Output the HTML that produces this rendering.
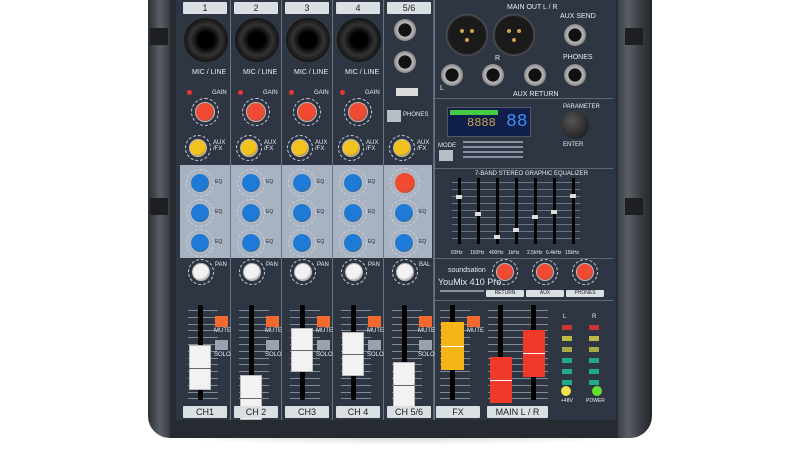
<!DOCTYPE html>
<html><head><meta charset="utf-8"><style>
*{margin:0;padding:0;box-sizing:border-box}
body{width:800px;height:450px;background:#fff;position:relative;overflow:hidden;font-family:"Liberation Sans",sans-serif}
.a{position:absolute}
.rail{background:linear-gradient(90deg,#2a2d33,#5a5f66 40%,#3a3e44 70%,#22252a)}
.lbl{position:absolute;background:#d9dfe2;color:#222;font-size:9px;text-align:center;line-height:12px;border-radius:1px}
.k{position:absolute;border-radius:50%}
.t{position:absolute;color:#e8ecf0;font-size:6px;white-space:nowrap}
</style></head><body>
<div class="a" style="left:150px;top:425px;width:500px;height:20px;background:radial-gradient(ellipse at center,#ccc,#fff 70%)"></div>
<div class="a rail" style="left:148px;top:0;width:30px;height:438px;border-radius:0 0 0 22px"></div>
<div class="a rail" style="left:612px;top:0;width:40px;height:438px;border-radius:0 0 22px 0"></div>
<div class="a" style="left:170px;top:0;width:448px;height:438px;background:#262a31"></div>
<div class="a" style="left:176px;top:0;width:440px;height:420px;background:#2e3644"></div>
<div class="a" style="left:180px;top:165px;width:252px;height:93px;background:#a7b3c0"></div>
<div class="a" style="left:433px;top:0;width:1px;height:420px;background:#5d6877"></div>
<div class="a" style="left:433px;top:98px;width:180px;height:1px;background:#5d6877"></div>
<div class="a" style="left:433px;top:168px;width:180px;height:1px;background:#5d6877"></div>
<div class="a" style="left:433px;top:258px;width:180px;height:1px;background:#5d6877"></div>
<div class="a" style="left:433px;top:300px;width:180px;height:1px;background:#5d6877"></div>
<div id="g"></div>
<script>
var h='';
function A(s){h+=s}
function knob(x,y,r,c){A('<div class="k" style="left:'+(x-r-4)+'px;top:'+(y-r-4)+'px;width:'+(2*r+8)+'px;height:'+(2*r+8)+'px;border:1px dashed #ccd"></div><div class="k" style="left:'+(x-r)+'px;top:'+(y-r)+'px;width:'+2*r+'px;height:'+2*r+'px;background:radial-gradient(circle at 40% 35%,'+c+','+c+' 60%,#555 100%);border:1.5px solid #bbb"></div>')}
function jack(x,y,r){A('<div class="k" style="left:'+(x-r)+'px;top:'+(y-r)+'px;width:'+2*r+'px;height:'+2*r+'px;background:radial-gradient(circle,#111 40%,#bbb 45%,#777 80%,#222 100%)"></div>')}
var cx=[180,231,282,333,384],labs=['1','2','3','4','5/6'],bl=['CH1','CH 2','CH3','CH 4','CH 5/6'];
var caps=[[345,390],[375,420],[328,372],[332,376],[362,408]];
for(var i=0;i<5;i++){var x=cx[i];
 A('<div class="a" style="left:'+(x+50)+'px;top:0;width:1px;height:420px;background:#6a7584"></div>');
 A('<div class="lbl" style="left:'+(x+3)+'px;top:2px;width:44px;height:12px">'+labs[i]+'</div>');
 if(i<4){A('<div class="k" style="left:'+(x+4)+'px;top:18px;width:44px;height:44px;background:radial-gradient(circle,#000 25%,#333 50%,#111 72%,#555 86%,#111 100%)"></div>');
  A('<div class="t" style="left:'+(x+12)+'px;top:69px;font-size:7px">MIC / LINE</div>');
  A('<div class="k" style="left:'+(x+7)+'px;top:90px;width:5px;height:5px;background:#e33"></div>');
  A('<div class="t" style="left:'+(x+32)+'px;top:90px">GAIN</div>');
  knob(x+25,112,10,'#f04a32');}
 else{jack(x+21,30,11);jack(x+21,62,11);
  A('<div class="a" style="left:'+(x+12)+'px;top:88px;width:22px;height:8px;background:#ddd"></div>');
  A('<div class="a" style="left:'+(x+3)+'px;top:110px;width:14px;height:12px;background:#b7bec6"></div><div class="t" style="left:'+(x+19)+'px;top:112px">PHONES</div>');
  knob(x+21,183,11,'#f04a32');}
 knob(x+18,148,9,'#f2c31d');
 A('<div class="t" style="left:'+(x+33)+'px;top:140px">AUX<br>/FX</div>');
 var ys=i<4?[183,213,243]:[213,243];
 for(var j=0;j<ys.length;j++){knob(x+20,ys[j],10,'#1e7ad6');A('<div class="t" style="left:'+(x+35)+'px;top:'+(ys[j]-4)+'px;color:#223;font-size:5px">EQ</div>')}
 knob(x+21,272,9,'#f2f2f2');
 A('<div class="t" style="left:'+(x+35)+'px;top:262px">'+(i<4?'PAN':'BAL')+'</div>');
 for(var k=0;k<14;k++)A('<div class="a" style="left:'+(x+8)+'px;top:'+(310+k*6.8)+'px;width:30px;height:1px;background:#7f8a98"></div>');
 A('<div class="a" style="left:'+(x+18)+'px;top:305px;width:5px;height:95px;background:#000;border-radius:2px"></div>');
 A('<div class="a" style="left:'+(x+9)+'px;top:'+caps[i][0]+'px;width:22px;height:'+(caps[i][1]-caps[i][0])+'px;background:#f2f2f2;border:1px solid #bbb"></div><div class="a" style="left:'+(x+9)+'px;top:'+((caps[i][0]+caps[i][1])/2)+'px;width:22px;height:1px;background:#666"></div>');
 A('<div class="a" style="left:'+(x+35)+'px;top:316px;width:13px;height:11px;background:#f46a2e"></div><div class="t" style="left:'+(x+34)+'px;top:328px">MUTE</div>');
 A('<div class="a" style="left:'+(x+35)+'px;top:340px;width:13px;height:10px;background:#9aa3ad"></div><div class="t" style="left:'+(x+34)+'px;top:352px">SOLO</div>');
 A('<div class="lbl" style="left:'+(x+3)+'px;top:406px;width:44px;height:12px">'+bl[i]+'</div>');
}
A('<div class="t" style="left:507px;top:4px;font-size:7px">MAIN OUT L / R</div>');
[[467,35],[514,35]].forEach(function(p){A('<div class="k" style="left:'+(p[0]-21)+'px;top:'+(p[1]-21)+'px;width:42px;height:42px;background:radial-gradient(circle,#1a1a1a 62%,#666 72%,#111 100%)"></div>');
 [[-5,-4],[5,-4],[0,5]].forEach(function(q){A('<div class="k" style="left:'+(p[0]+q[0]-2)+'px;top:'+(p[1]+q[1]-2)+'px;width:4px;height:4px;background:#c9a44a"></div>')})});
jack(452,75,11);jack(493,75,11);jack(535,75,11);jack(575,35,11);jack(575,75,11);
A('<div class="t" style="left:560px;top:13px;font-size:7px">AUX SEND</div><div class="t" style="left:563px;top:54px;font-size:7px">PHONES</div><div class="t" style="left:513px;top:91px;font-size:7px">AUX RETURN</div><div class="t" style="left:440px;top:85px;font-size:7px">L</div><div class="t" style="left:495px;top:55px;font-size:7px">R</div>');
A('<div class="a" style="left:447px;top:107px;width:84px;height:30px;background:#0f1f4a;border:1px solid #556"></div>');
A('<div class="a" style="left:450px;top:110px;width:48px;height:5px;background:#4c4"></div>');
A('<div class="t" style="left:467px;top:116px;font-size:12px;color:#c9a24a;font-family:Liberation Mono">8888</div><div class="t" style="left:506px;top:112px;font-size:18px;color:#3a8ff0;font-family:Liberation Mono">88</div>');
A('<div class="k" style="left:561px;top:111px;width:28px;height:28px;background:radial-gradient(circle at 40% 35%,#555,#111)"></div>');
A('<div class="t" style="left:563px;top:104px">PARAMETER</div><div class="t" style="left:563px;top:142px">ENTER</div>');
A('<div class="a" style="left:439px;top:150px;width:14px;height:11px;background:#b7bec6"></div><div class="t" style="left:438px;top:143px">MODE</div>');
for(var r=0;r<4;r++)A('<div class="a" style="left:463px;top:'+(141+r*5)+'px;width:60px;height:2px;background:#8893a1"></div>');
A('<div class="t" style="left:475px;top:171px">7-BAND STEREO GRAPHIC EQUALIZER</div>');
var eqy=[195,212,235,228,215,210,194],fq=['63Hz','150Hz','400Hz','1kHz','2.5kHz','6.4kHz','15kHz'];
for(var r=0;r<9;r++)A('<div class="a" style="left:452px;top:'+(182+r*7)+'px;width:128px;height:1px;background:#6a7584"></div>');
for(var e=0;e<7;e++){var ex=459+e*19;A('<div class="a" style="left:'+(ex-1.5)+'px;top:178px;width:3px;height:66px;background:#000"></div><div class="a" style="left:'+(ex-3)+'px;top:'+eqy[e]+'px;width:6px;height:4px;background:#ddd"></div><div class="t" style="left:'+(ex-8)+'px;top:250px;font-size:5px">'+fq[e]+'</div>')}
A('<div class="t" style="left:448px;top:267px;font-size:7px">soundsation</div><div class="t" style="left:438px;top:277px;font-size:9px">YouMix 410 Pro</div><div class="a" style="left:440px;top:290px;width:44px;height:2px;background:#8893a1"></div>');
[505,545,585].forEach(function(x,n){knob(x,272,9,'#f04a32');A('<div class="lbl" style="left:'+(x-19)+'px;top:290px;width:38px;height:7px;font-size:5px;line-height:7px">'+['RETURN','AUX','PHONES'][n]+'</div>')});
for(var k=0;k<14;k++){A('<div class="a" style="left:440px;top:'+(310+k*6.8)+'px;width:30px;height:1px;background:#7f8a98"></div>');A('<div class="a" style="left:488px;top:'+(310+k*6.8)+'px;width:60px;height:1px;background:#7f8a98"></div>')}
A('<div class="a" style="left:450px;top:305px;width:5px;height:95px;background:#000"></div><div class="a" style="left:441px;top:322px;width:23px;height:48px;background:#f7b416"></div><div class="a" style="left:441px;top:346px;width:23px;height:1px;background:#fff"></div>');
A('<div class="a" style="left:467px;top:316px;width:13px;height:11px;background:#f46a2e"></div><div class="t" style="left:467px;top:328px">MUTE</div>');
A('<div class="a" style="left:498px;top:305px;width:5px;height:95px;background:#000"></div><div class="a" style="left:490px;top:357px;width:22px;height:46px;background:#ef3a2a"></div><div class="a" style="left:490px;top:380px;width:22px;height:1px;background:#fff"></div>');
A('<div class="a" style="left:531px;top:305px;width:5px;height:95px;background:#000"></div><div class="a" style="left:523px;top:330px;width:22px;height:47px;background:#ef3a2a"></div><div class="a" style="left:523px;top:353px;width:22px;height:1px;background:#fff"></div>');
A('<div class="t" style="left:563px;top:314px">L</div><div class="t" style="left:592px;top:314px">R</div>');
var mc=['#c33','#bb4','#aa4','#2a8','#2a8','#2a8'];
for(var m=0;m<6;m++){A('<div class="a" style="left:562px;top:'+(325+m*11)+'px;width:10px;height:5px;background:'+mc[m]+'"></div><div class="a" style="left:589px;top:'+(325+m*11)+'px;width:10px;height:5px;background:'+mc[m]+'"></div>')}
A('<div class="k" style="left:561px;top:386px;width:10px;height:10px;background:#f5e24a"></div><div class="k" style="left:592px;top:386px;width:10px;height:10px;background:#6d3"></div>');
A('<div class="t" style="left:561px;top:398px;font-size:5px">+48V</div><div class="t" style="left:586px;top:398px;font-size:5px">POWER</div>');
A('<div class="lbl" style="left:436px;top:406px;width:44px;height:12px">FX</div><div class="lbl" style="left:487px;top:406px;width:61px;height:12px">MAIN L / R</div>');
A('<div class="a" style="left:150px;top:28px;width:18px;height:17px;background:#1d1f23"></div><div class="a" style="left:150px;top:198px;width:18px;height:17px;background:#1d1f23"></div><div class="a" style="left:625px;top:28px;width:18px;height:17px;background:#1d1f23"></div><div class="a" style="left:625px;top:198px;width:18px;height:17px;background:#1d1f23"></div>');
document.getElementById('g').innerHTML=h;
</script>
</body></html>
